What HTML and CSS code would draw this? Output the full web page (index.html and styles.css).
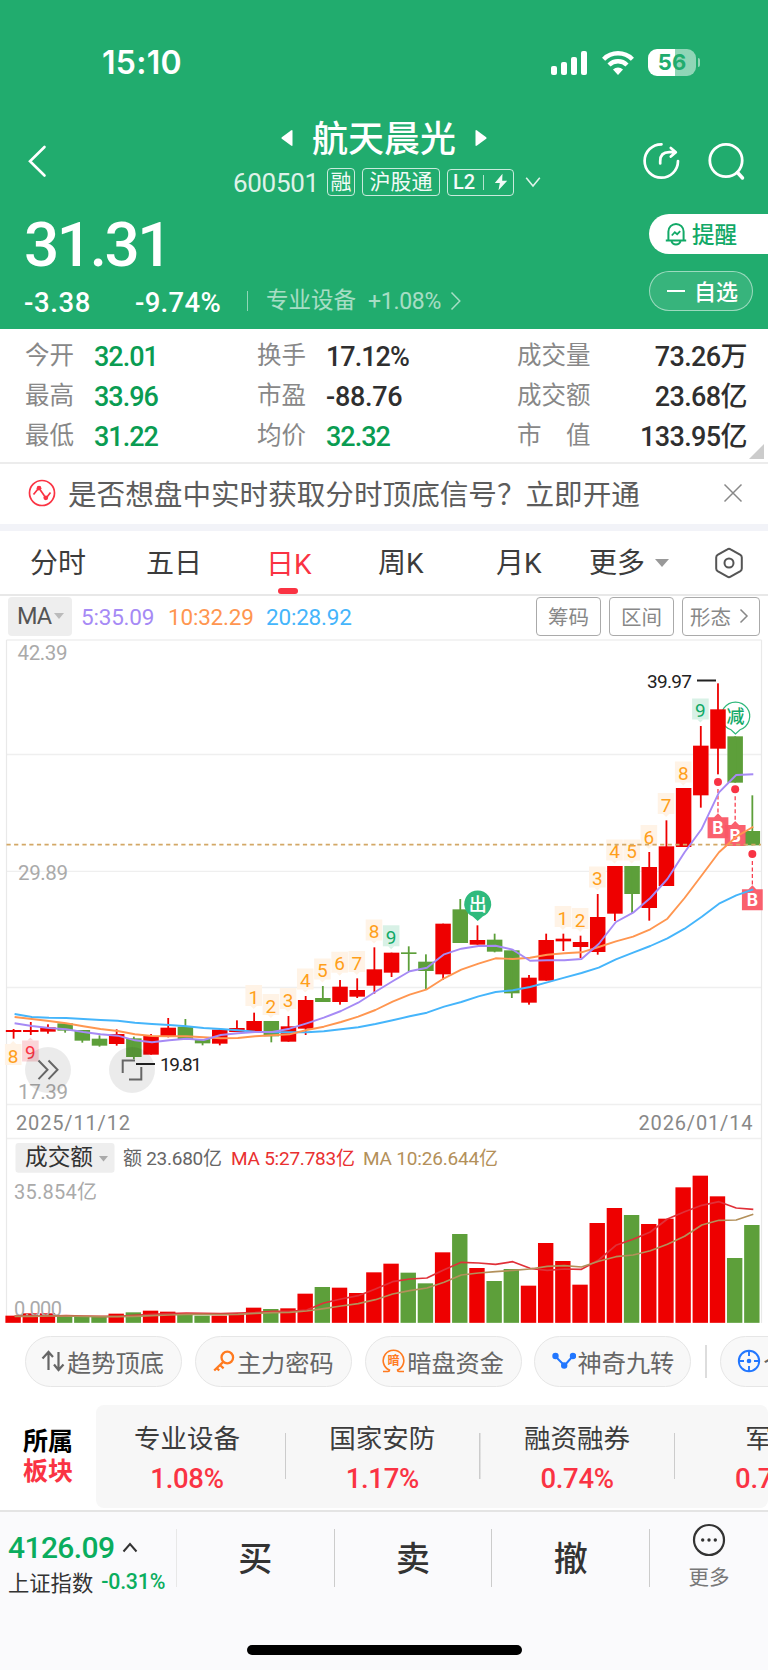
FILE: index.html
```html
<!DOCTYPE html>
<html lang="zh-CN">
<head>
<meta charset="utf-8">
<title>航天晨光 600501</title>
<link rel="stylesheet" href="styles.css">
</head>
<body>
<div class="app">
  <header class="hero">
    <div class="status">
      <span class="clock">15:10</span>
      <div class="status-icons">
        <svg class="signal" width="38" height="26" viewBox="0 0 38 26" fill="#fff"><rect x="1" y="16" width="6" height="9" rx="2"/><rect x="11" y="12" width="6" height="13" rx="2"/><rect x="21" y="7" width="6" height="18" rx="2"/><rect x="31" y="1" width="6" height="24" rx="2"/></svg>
        <svg class="wifi" width="34" height="26" viewBox="0 0 34 26" fill="none" stroke="#fff" stroke-width="4.4"><path d="M2.6 9.2A20.5 20.5 0 0 1 31.4 9.2"/><path d="M8 15A12.8 12.8 0 0 1 26 15"/><path d="M17 25l-5-5.6a7.2 7.2 0 0 1 10 0z" fill="#fff" stroke="none"/></svg>
        <div class="battery"><span class="b-on">5</span><span class="b-off">6</span></div><i class="nub"></i>
      </div>
    </div>
    <div class="nav">
      <svg class="back" width="20" height="34" viewBox="0 0 20 34" fill="none" stroke="#fff" stroke-width="2.6" stroke-linecap="round"><path d="M17.500 3L3 17.300L17.500 31.500"/></svg>
      <div class="title-block">
        <div class="title-row">
          <svg width="12" height="18" viewBox="0 0 12 18" fill="#fff"><path d="M11.500 2v14q0 1.500-1.500.5L.8 9.800q-.8-.8 0-1.600L10 1.500q1.500-1 1.500.5z"/></svg>
          <h1>航天晨光</h1>
          <svg width="12" height="18" viewBox="0 0 12 18" fill="#fff"><path d="M.5 2v14q0 1.500 1.500.5l9.200-6.700q.8-.8 0-1.600L2 1.500Q.5.5.5 2z"/></svg>
        </div>
        <div class="code-row">
          <span class="code">600501</span>
          <span class="tag tag-rong">融</span>
          <span class="tag tag-hk">沪股通</span>
          <span class="tag tag-l2">L2<i></i><svg width="14" height="18" viewBox="0 0 14 18" fill="#fff"><path d="M8.500.8L.8 10h5L4.500 17.200 13.200 7.800H8.200z"/></svg></span>
          <svg class="down" width="16" height="12" viewBox="0 0 16 12" fill="none" stroke="#fff" stroke-opacity=".85" stroke-width="1.600"><path d="M1.200 1.800L8 10 14.800 1.800"/></svg>
        </div>
      </div>
      <div class="nav-actions">
        <svg width="40" height="40" viewBox="0 0 40 40" fill="none" stroke="#fff" stroke-width="2.700" stroke-linecap="round"><path d="M20.500 3.300A16.700 16.700 0 1 0 37 20"/><path d="M19.200 22.500v-2.300q0-9 9-9h5.500M29.800 7l5 4.300-5 4.300" stroke-linejoin="round"/></svg>
        <svg width="40" height="40" viewBox="0 0 40 40" fill="none" stroke="#fff" stroke-width="2.800" stroke-linecap="round"><circle cx="20" cy="19.500" r="16.200"/><path d="M31.500 31.500l5 5.500" stroke-width="3.500"/></svg>
      </div>
    </div>
    <div class="quote">
      <div class="price-block">
        <div class="price">31.31</div>
        <div class="change-row"><span class="chg">-3.38</span><span class="pct">-9.74%</span><i class="bar"></i><span class="industry">专业设备</span><span class="ind-pct">+1.08%</span><svg width="12" height="20" viewBox="0 0 12 20" fill="none" stroke="#fff" stroke-opacity=".6" stroke-width="1.500"><path d="M1.500 1.500L9.800 10 1.500 18.500"/></svg></div>
      </div>
      <div class="quote-actions">
        <div class="remind"><svg width="22" height="24" viewBox="0 0 22 24" fill="none" stroke="#12a967" stroke-width="2"><path d="M3.400 18v-8.500a7.600 7.600 0 0 1 15.200 0V18M.8 18.500h20.400M6.500 19.500c1.500 4 7.500 4 9 0" /><path d="M6.800 13.500l3-3.300 2.400 2 3-3" stroke-width="1.800"/></svg><span>提醒</span></div>
        <div class="watch"><i></i><span>自选</span></div>
      </div>
    </div>
  </header>

  <section class="stats">
    <div class="stat"><label>今开</label><b class="g">32.01</b></div><div class="stat"><label>换手</label><b>17.12%</b></div><div class="stat end"><label>成交量</label><b>73.26万</b></div>
    <div class="stat"><label>最高</label><b class="g">33.96</b></div><div class="stat"><label>市盈</label><b class="wide-num">-88.76</b></div><div class="stat end"><label>成交额</label><b>23.68亿</b></div>
    <div class="stat"><label>最低</label><b class="g">31.22</b></div><div class="stat"><label>均价</label><b class="g">32.32</b></div><div class="stat end"><label>市<em></em>值</label><b>133.95亿</b></div>
    <i class="corner"></i>
  </section>

  <section class="notice">
    <svg width="28" height="28" viewBox="0 0 28 28" fill="none" stroke="#fa3343" stroke-width="1.700"><circle cx="14" cy="14" r="12.500"/><path d="M5.500 15.500l4.500-5.500M12.300 11l4.200 6M19 18l3.500-4.500"/><circle cx="11" cy="9.200" r="2.400" fill="#fa3343" stroke="none"/><circle cx="17.800" cy="18.800" r="2.400" fill="#fa3343" stroke="none"/></svg>
    <p>是否想盘中实时获取分时顶底信号？立即开通</p>
    <svg class="close" width="20" height="20" viewBox="0 0 20 20" stroke="#888" stroke-width="1.500"><path d="M1.500 1.500l17 17M18.500 1.500l-17 17"/></svg>
  </section>

  <nav class="tabs">
    <span class="t1">分时</span><span class="t2">五日</span><span class="t3 active">日K</span><span class="t4">周K</span><span class="t5">月K</span><span class="t6">更多<i class="caret"></i></span>
    <svg width="30" height="32" viewBox="0 0 30 32" fill="none" stroke="#555" stroke-width="2"><path d="M15 1.800q.8 0 1.600.5l9.800 5.600q1.400.9 1.400 2.500v11.200q0 1.600-1.400 2.500l-9.800 5.600q-1.600.9-3.200 0l-9.800-5.600q-1.400-.9-1.400-2.500V10.400q0-1.600 1.400-2.500l9.800-5.600q.8-.5 1.600-.5z"/><circle cx="15" cy="16" r="4.500"/></svg>
  </nav>

  <section class="ma-row">
    <span class="ma-pill">MA<i class="caret"></i></span>
    <span class="ma m5">5:35.09</span><span class="ma m10">10:32.29</span><span class="ma m20">20:28.92</span>
    <div class="ma-btns"><span>筹码</span><span>区间</span><span class="wide">形态<svg width="10" height="16" viewBox="0 0 10 16" fill="none" stroke="#888" stroke-width="1.500"><path d="M1.500 1.500L8 8l-6.500 6.500"/></svg></span></div>
  </section>

  <section class="chart"><svg id="kline" width="768" height="692" viewBox="0 636 768 692"></svg></section>

  <section class="chips">
    <span class="chip up"><svg width="26" height="22" viewBox="0 0 26 22" fill="none" stroke="#666" stroke-width="2.200"><path d="M7.500 20V2.500M1.500 8.500L7.500 2l4.500 5M17.500 2v18M13 14.500l4.500 5.500 5-5.500"/></svg>趋势顶底</span>
    <span class="chip"><svg width="22" height="22" viewBox="0 0 22 22" fill="none" stroke="#ff7a1f" stroke-width="2.300"><circle cx="14.300" cy="7.500" r="5.800"/><path d="M10.300 11.800L1.200 20.500M7 15l3.600 3.300M3.700 18l2.500 2.500"/></svg>主力密码</span>
    <span class="chip"><svg width="23" height="24" viewBox="0 0 23 24" fill="none" stroke="#ff7a1f" stroke-width="1.600"><path d="M1 22.500h5q1.500 0 1.500-1.400A10.300 10.300 0 1 1 15.500 21.100q0 1.400 1.500 1.400h5"/><text class="dark-txt" x="11.500" y="16" text-anchor="middle">暗</text></svg>暗盘资金</span>
    <span class="chip"><svg width="24" height="18" viewBox="0 0 24 18" fill="#2277ff" stroke="#2277ff" stroke-width="2"><path d="M3.500 4.500l9 9 8-9" fill="none"/><circle cx="3.500" cy="4" r="2.200"/><circle cx="12.200" cy="13.500" r="2.200"/><circle cx="21" cy="4" r="2.200"/></svg>神奇九转</span>
    <i class="sep"></i>
    <span class="chip cut"><svg width="24" height="24" viewBox="0 0 24 24" fill="none" stroke="#2277ff" stroke-width="1.900"><circle cx="12" cy="12" r="10.200"/><path d="M12 2v5M12 17v5M2 12h5M17 12h5"/><circle cx="12" cy="12" r="2.300" fill="#2277ff" stroke="none"/></svg>个股</span>
  </section>

  <section class="sector">
    <div class="sector-name"><b>所属</b><b class="r">板块</b></div>
    <div class="sector-list">
      <div class="item"><span>专业设备</span><b>1.08%</b></div>
      <div class="item"><span>国家安防</span><b>1.17%</b></div>
      <div class="item"><span>融资融券</span><b>0.74%</b></div>
      <div class="item"><span>军工</span><b>0.75%</b></div>
    </div>
  </section>

  <footer class="dock">
    <div class="dock-row">
      <div class="index"><div class="index-top"><b>4126.09</b><svg width="16" height="11" viewBox="0 0 16 11" fill="none" stroke="#333" stroke-width="2"><path d="M1.500 9.500L8 2l6.500 7.500"/></svg></div><div class="index-sub"><span>上证指数</span><em>-0.31%</em></div></div>
      <div class="act">买</div><div class="act">卖</div><div class="act">撤</div>
      <div class="more"><svg width="34" height="34" viewBox="0 0 34 34"><circle cx="17" cy="17" r="15" fill="none" stroke="#333" stroke-width="2.200"/><g fill="#333"><circle cx="10.700" cy="17" r="1.700"/><circle cx="17" cy="17" r="1.700"/><circle cx="23.300" cy="17" r="1.700"/></g></svg><span>更多</span></div>
    </div>
    <i class="home"></i>
  </footer>
</div>
<script src="chart.js"></script>
</body>
</html>
```
FILE: styles.css
```css
* { box-sizing: border-box; }
body { margin: 0; background: #fff; font-family: Roboto, "Noto Sans CJK SC", sans-serif; color: #333; }
.app { width: 768px; height: 1670px; overflow: hidden; display: flex; flex-direction: column; }
.app > * { flex: none; }
svg { display: block; flex: none; }
i, em { font-style: normal; display: block; flex: none; }
h1, p { margin: 0; }
span, b, label { white-space: nowrap; }

.hero { height: 329px; background: #21ac6e; color: #fff; display: flex; flex-direction: column; }
.status { height: 112px; padding: 13px 68px 0 102px; display: flex; align-items: center; justify-content: space-between; }
.clock { font: 600 32px/38px Inter, sans-serif; letter-spacing: 0.3px; }
.status-icons { display: flex; align-items: center; }
.wifi { margin-left: 13px; }
.battery { margin-left: 13px; width: 48px; height: 27px; border-radius: 9px; display: flex; justify-content: center; align-items: center; background: linear-gradient(90deg, #fff 56%, rgba(255,255,255,.5) 56%); color: #21ac6e; font: 700 22px/27px Inter, sans-serif; }
.nub { width: 2px; height: 9px; margin-left: 2px; border-radius: 0 2px 2px 0; background: rgba(255,255,255,.5); }

.nav { height: 92px; display: grid; grid-template-columns: 207px 362px 1fr; }
.back { margin: 32px 0 0 27px; }
.title-row { display: flex; align-items: center; height: 52px; gap: 19px; padding-left: 74px; }
h1 { font: 500 36px/48px "Noto Sans CJK SC", sans-serif; height: 52px; }
.code-row { display: flex; align-items: center; height: 28px; margin-top: 4px; padding-left: 26px; }
.code { width: 94px; font-size: 26px; line-height: 28px; letter-spacing: -0.3px; opacity: .85; padding-top: 2px; }
.tag { border: 1px solid rgba(255,255,255,.8); border-radius: 4px; height: 28px; display: flex; align-items: center; justify-content: center; font-size: 21px; line-height: 26px; opacity: .95; }
.tag-rong { width: 28px; margin-right: 7px; }
.tag-hk { width: 78px; margin-right: 7px; }
.tag-l2 { width: 67px; height: 27px; font-weight: 500; font-size: 20px; }
.tag-l2 i { width: 1px; height: 15px; background: rgba(255,255,255,.7); margin: 0 10px 0 8px; }
.down { margin-left: 11px; }
.nav-actions { display: flex; gap: 25px; padding: 29px 0 0 72px; }

.quote { display: flex; justify-content: space-between; height: 125px; }
.price-block { padding-left: 24px; }
.price { font-size: 62px; font-weight: 500; line-height: 62px; letter-spacing: -2.4px; margin-top: 10px; height: 62px; }
.change-row { display: flex; align-items: center; height: 34px; margin-top: 8px; }
.chg, .pct { font-size: 27.500px; font-weight: 500; letter-spacing: 0.600px; padding-top: 2px; }
.chg { width: 111px; } .pct { width: 112px; letter-spacing: 0.300px; }
.bar { width: 1px; height: 20px; background: rgba(255,255,255,.5); }
.industry { font-size: 22.5px; margin-left: 18px; opacity: .6; line-height: 30px; padding-bottom: 2px; }
.ind-pct { font-size: 23px; opacity: .6; margin-left: 12px; width: 82px; letter-spacing: -0.300px; }
.quote-actions { width: 119px; padding-top: 10px; }
.remind { height: 40px; background: #fff; border-radius: 20px 0 0 20px; color: #12a967; display: flex; align-items: center; padding-left: 16px; font-size: 22.500px; font-weight: 500; gap: 5px; }
.remind span, .watch span { padding-bottom: 2px; }
.watch { width: 104px; height: 40px; margin-top: 17px; border: 1px solid rgba(255,255,255,.5); background: rgba(255,255,255,.1); border-radius: 20px; display: flex; align-items: center; font-size: 22px; font-weight: 500; padding-left: 17px; }
.watch i { width: 18px; height: 2px; background: #fff; margin-right: 9px; }

.stats { position: relative; height: 135px; display: grid; grid-template-columns: 232px 261px 1fr; grid-template-rows: repeat(3, 40px); padding: 7px 21px 0 25px; border-bottom: 2px solid #ececec; }
.stat { display: flex; align-items: center; }
.stat label { font-size: 24.500px; line-height: 40px; color: #888; margin-right: 20px; display: flex; }
.stat label em { width: 24.500px; }
.stat b { font-weight: 500; font-size: 27px; letter-spacing: -1px; line-height: 40px; padding-top: 2px; color: #2f2f2f; }
.stat b.wide-num { letter-spacing: -0.300px; }
.stat.end { justify-content: space-between; }
.stat.end label { margin-left: -1px; }
.stat.end b { letter-spacing: -0.600px; }
.stat b.g { color: #0a9c52; }
.corner { position: absolute; right: 4px; bottom: 3px; border-left: 15px solid transparent; border-bottom: 15px solid #ccc; }

.notice { height: 67px; display: flex; align-items: center; padding: 0 25px 0 28px; border-bottom: 7px solid #f2f3f8; }
.notice > svg { margin-bottom: 2px; }
.notice p { font-size: 28.600px; margin-left: 12px; flex: 1; white-space: nowrap; line-height: 40px; padding-top: 1px; color: #5c5c5c; }

.tabs { height: 65px; display: grid; grid-template-columns: 116px 120px 112px 118px 93px 125px 1fr; align-items: center; padding-left: 30px; border-bottom: 2px solid #e8e8e8; font-size: 28px; color: #3c3c3c; }
.tabs span { height: 64px; line-height: 67px; display: flex; align-items: center; }
.tabs .active { color: #fa3343; flex-direction: column; align-items: flex-start; }
.tabs .active::after { content: ""; width: 20px; height: 6px; border-radius: 3px; background: #fa3343; margin: -10px 0 0 12px; }
.caret { border: 7px solid transparent; border-top: 8px solid #999; border-bottom: 0; }
.tabs .caret { margin-left: 10px; }
.ma-row { height: 40px; display: flex; align-items: center; padding: 0 8px; }
.ma-pill { width: 64px; height: 39px; background: #eee; border-radius: 4px; display: flex; align-items: center; padding-left: 9px; font-size: 23.500px; color: #555; letter-spacing: -1px; margin-right: 9px; }
.ma-pill .caret { border-width: 6px 5px 0; border-top-color: #bbb; margin-left: 3px; }
.ma { font-size: 22.500px; letter-spacing: -0.200px; padding-top: 1px; }
.m5 { color: #a68af5; width: 87px; } .m10 { color: #ff9650; width: 98px; } .m20 { color: #45b5fb; }
.ma-btns { display: flex; gap: 8px; margin-left: auto; }
.ma-btns span { width: 65px; height: 39px; border: 1.500px solid #aaa; border-radius: 4px; display: flex; align-items: center; justify-content: center; color: #888; font-size: 20.500px; }
.ma-btns .wide { width: 78px; gap: 8px; padding-right: 3px; }

.chart { height: 692px; }
#kline text { font-family: Roboto, "Noto Sans CJK SC", sans-serif; }

.chips { height: 68px; display: flex; padding: 8px 0 0 25px; }
.chip { width: 157px; height: 51px; border: 1.500px solid #e6e6e6; background: #f8f8f8; border-radius: 26px; display: flex; align-items: center; justify-content: center; font-size: 24.200px; color: #666; margin-right: 12.800px; flex: none; gap: 2px; padding-bottom: 1px; }
.chip.up { gap: 0; padding-right: 2px; }
.dark-txt { font-size: 12px; font-weight: 700; fill: #ff7a1f; stroke: none; }
.sep { width: 2px; height: 33px; background: #ddd; margin: 9px 13px 0 1px; }
.chip.cut { justify-content: flex-start; padding-left: 16px; margin: 0; }

.sector { height: 116px; display: flex; padding-top: 9px; border-bottom: 2px solid #e4e4e4; }
.sector-name { width: 96px; height: 103px; display: flex; flex-direction: column; align-items: center; justify-content: center; font-size: 25px; line-height: 30px; color: #000; }
.r { color: #fa3343; }
.sector-list { width: 672px; height: 103px; background: #f7f7f7; border-radius: 8px; overflow: hidden; display: flex; }
.item { flex: none; width: 194.700px; display: flex; flex-direction: column; align-items: center; padding: 15px 2px 0 0; background: linear-gradient(#ccc, #ccc) right 28px / 1.500px 46px no-repeat; }
.item:first-child { width: 190px; padding-right: 8px; }
.item span { font-size: 26.500px; line-height: 38px; color: #3c3c3c; }
.item b { font-size: 27.500px; font-weight: 500; line-height: 36px; margin-top: 3px; letter-spacing: -0.300px; color: #fa3343; }

.dock { height: 158px; background: #fafafc; }
.dock-row { height: 83px; display: flex; padding-top: 17px; }
.index { width: 177px; height: 58px; padding-left: 8px; border-right: 1px solid #e8e8e8; }
.index-top { display: flex; align-items: center; gap: 8px; height: 36px; }
.index-top b { font-size: 30px; font-weight: 500; letter-spacing: -0.600px; color: #0aad5e; }
.index-sub { display: flex; align-items: center; gap: 8px; font-size: 21.300px; height: 34px; margin-top: -1px; }
.index-sub em { color: #0aad5e; font-weight: 500; letter-spacing: -0.200px; }
.act { width: 157.700px; height: 58px; border-right: 1px solid #ccc; font-size: 34px; font-weight: 500; line-height: 61px; text-align: center; }
.more { width: 118px; display: flex; flex-direction: column; align-items: center; color: #777; font-size: 20.500px; margin-top: -6px; }
.more span { line-height: 30px; margin-top: 6px; }
.home { width: 275px; height: 10px; border-radius: 5px; background: #000; margin: 50px auto 0; }
```
FILE: chart.js
```javascript
const svg = document.getElementById('kline');
const RED = '#ee0000', GREEN = '#5d9f3a', STEP = 17.18, X0 = 13.6;
const cx = i => X0 + i * STEP;
const out = [];
const add = s => out.push(s);

// grid
[640, 754.5, 871.3, 987.5, 1104.5, 1138.5].forEach(y =>
  add(`<path d="M6.500 ${y}H761.500" stroke="#efefef" stroke-width="1.300"/>`));
add('<path d="M6.500 640V1323M761.500 640V1323" stroke="#e9e9e9" stroke-width="1.200"/>');

const text = (x, y, s, size, fill, len, extra = '') =>
  add(`<text x="${x}" y="${y}" font-size="${size}" fill="${fill}" textLength="${len}" ${extra}>${s}</text>`);

// signal bubble drawn under the candles
add('<path d="M735.500 734l-4.500-4.300A14.200 14.200 0 1 1 740 729.700z" fill="#fff" stroke="#2fb87b" stroke-width="1.200"/>');
add('<text x="735.500" y="723" font-size="18" font-weight="500" fill="#12a967" text-anchor="middle">减</text>');

// candles: origin, colour, body top, body bottom, high, low (offsets in thirds of a pixel)
const candles = [
  [900,1,390,396,387,416],[900,1,390,396,366,405],[900,1,382,395,373,401],[900,0,370,392,370,398],
  [900,0,390,422,390,428],[900,0,416,437,406,440],[900,1,402,432,388,437],[900,0,415,471,410,478],
  [900,1,408,464,402,464],[900,1,383,408,354,412],[900,0,380,418,357,418],[900,0,417,430,417,436],
  [900,1,389,431,384,436],[900,1,384,396,361,396],[900,1,363,395,338,395],[900,0,363,409,363,427],
  [900,1,379,425,348,425],[900,1,300,386,288,405],[900,0,294,306,258,306],[900,1,260,306,240,314],
  [900,1,270,290,235,294],[900,1,208,257,142,281],[800,1,458,518,458,531],[800,0,457,462,439,515],
  [800,0,485,513,463,567],[800,1,371,523,371,539],[800,0,328,429,297,429],[800,1,420,434,376,434],
  [800,0,419,455,401,457],[800,0,451,580,451,594],[800,1,533,608,525,614],[800,1,420,542,401,542],
  [800,1,416,424,401,453],[800,1,426,441,407,474],[800,1,351,456,282,464],[800,1,198,341,198,363],
  [800,0,198,282,198,340],[800,1,201,324,156,362],[800,1,139,258,61,258],[640,1,444,621,444,621],
  [640,1,317,466,258,503],[640,1,208,326,130,403],[640,0,289,428,289,428],[640,0,573,616,466,616]
];
candles.forEach(([o, up, t, b, h, l], i) => {
  const c = up ? RED : GREEN, x = cx(i);
  add(`<rect x="${x - 7.75}" y="${o + t / 3}" width="15.500" height="${(b - t) / 3}" fill="${c}"/>`);
  add(`<rect x="${x - 0.9}" y="${o + h / 3}" width="1.800" height="${(l - h) / 3}" fill="${c}"/>`);
});

// numbered sequence tags
const tag = (i, y, n, kind = 'o', up = false) => {
  const x = cx(i) - 0.4, bg = {o:'#fff3e6', g:'#d8f1e6', r:'#fbd5d8'}[kind], fg = {o:'#ff9f1a', g:'#12a967', r:'#fa3343'}[kind];
  add(`<rect x="${x - 8.3}" y="${y}" width="16.600" height="21" fill="${bg}"/>`);
  add(up ? `<path d="M${x - 3} ${y}l3-3 3 3z" fill="${bg}"/>` : `<path d="M${x - 3} ${y + 21}l3 3 3-3z" fill="${bg}"/>`);
  add(`<text x="${x}" y="${y + 18.5}" font-size="19" fill="${fg}" text-anchor="middle">${n}</text>`);
};
tag(0,1044,8,'o',true); tag(1,1040.500,9,'r',true);
[[14,985,1],[15,994,2],[16,988,3],[17,968.5,4],[18,958.5,5],[19,951.7,6],[20,951,7],[21,919.5,8],
 [32,906,1],[33,908,2],[34,866.5,3],[35,839.5,4],[36,839.5,5],[37,825,6],[38,793,7],[39,761.5,8]]
  .forEach(t => tag(...t));
tag(22,925.3,9,'g'); tag(40,698.5,9,'g');

add('<path d="M477.700 921l-5-4.500A13.500 13.500 0 1 1 482.700 916.500z" fill="#2fba7d"/>');
add('<text x="477.700" y="910.500" font-size="18" font-weight="500" fill="#fff" text-anchor="middle">出</text>');

// buy points
[[41,782,817.3],[42,789.3,825],[43,854,889.3]].forEach(([i, d, y]) => {
  const x = cx(i);
  add(`<circle cx="${x}" cy="${d}" r="4" fill="#f83344"/>`);
  add(`<path d="M${x} ${d + 7}V${y - 2}" stroke="#f83344" stroke-width="1.200" stroke-dasharray="4 2.500"/>`);
  add(`<path d="M${x - 10.4} ${y}h6.500l3.900-4 3.900 4h6.500v21h-20.800z" fill="#fa5766" fill-opacity=".95"/>`);
  add(`<text x="${x}" y="${y + 16.500}" font-size="17" font-weight="700" fill="#fff" text-anchor="middle" style="font-family:Inter">B</text>`);
});

// last price
add('<path d="M6.500 844.700H761" stroke="#d3a866" stroke-width="1.700" stroke-dasharray="4.200 3.400"/>');

// moving averages
const line = (parts, color, w = 1.9) => {
  let i = 0;
  const p = parts.flatMap(([o, ...v]) => v.map(n => `${(cx(i++) + 1).toFixed(1)} ${(o + n / 3).toFixed(1)}`));
  add(`<path d="M${p.join('L')}" fill="none" stroke="${color}" stroke-width="${w}" stroke-linejoin="round"/>`);
};
line([[900,342,351,353,354,357,360,362,368,372,375,379,384,387,391,395,397,397,397,394,388,382,372],
  [800,661,649,638,620,606,589,576,571,561,547,533,519,503,478,458,438,415,386,350,311,286,268]], '#45b5fb');
line([[900,351,357,363,370,379,387,393,403,408,409,409,412,415,414,409,406,403,390,380,366,350,330],
  [800,605,584,568,535,509,491,475,477,473,464,460,457,441,424,410,388,356,294,226,157],[640,590,560]], '#ff9650');
line([[900,370,378,384,388,396,403,407,421,427,421,416,420,405,400,396,396,386,370,353,333,308,275],
  [800,544,514,503,463,446,438,437,449,482,481,481,477,432,366,338,294,237,157],[640,566,457,405,403]], '#a68af5');

// axis labels and extremes
text(17.500, 660, '42.39', 20.500, '#aaa', 50);
text(18, 879.500, '29.89', 20.500, '#aaa', 50);
text(18, 1099, '17.39', 20.500, '#aaa', 50);
text(647, 687.700, '39.97', 19, '#222', 45);
text(160, 1071.300, '19.81', 19, '#222', 42);
add('<path d="M697 680.500H716M136 1064H155" stroke="#222" stroke-width="2"/>');
text(16, 1130, '2025/11/12', 20, '#888', 114);
text(638.500, 1130, '2026/01/14', 20, '#888', 114);

// floating controls
add('<g fill="#000" fill-opacity=".08"><circle cx="48" cy="1070" r="23"/><circle cx="132" cy="1070" r="23"/></g>');
add('<g fill="none" stroke="#666" stroke-width="2"><path d="M38.500 1060.500l9 9.300-9 9.300M48.500 1060.500l9 9.300-9 9.300"/><path d="M122.700 1073V1060.500H135M141.300 1067V1079.500H129"/></g>');

// turnover header
add('<rect x="15.500" y="1143" width="99" height="29.700" rx="3" fill="#eee"/><path d="M99 1156h9l-4.500 5.500z" fill="#aaa"/>');
text(25, 1165, '成交额', 22.700, '#333', 68);
text(123, 1165.200, '额 23.680亿', 19, '#666', 99);
text(231, 1165.200, 'MA 5:27.783亿', 19, '#e93030', 124);
text(363, 1165.200, 'MA 10:26.644亿', 19, '#b3905a', 135);
text(14, 1198.500, '35.854亿', 20, '#aaa', 83);

// turnover bars
const vol = [587,580,580,590,590,591,581,577,572,575,585,587,587,579,563,567,565,521,501,503,519,457,431,458,490,397,
  342,444,483,447,497,369,423,494,309,264,285,312,296,202,167,229,414,315];
vol.forEach((v, i) => add(`<rect x="${cx(i) - 8.2}" y="${1120 + v / 3}" width="15.400" height="${(608.5 - v) / 3}" fill="${candles[i][1] ? RED : GREEN}"/>`));
text(14, 1315.500, '0.000', 20, '#aaa', 48);
line([[1120,588,588,588,587,588,589,589,586,583,581,579,580,581,579,578,574,574,570,549,537,527,507,485,477,474,449,427,429,433,
  425,445,451,447,448,420,376,358,336,297,275,256,245,264,268]], '#e03038', 1.7);
line([[1120,589,589,588,588,589,590,590,589,587,585,583,583,584,583,580,578,577,573,566,558,551,539,522,512,504,487,465,459,455,
  451,447,439,437,441,424,410,405,392,373,349,315,301,300,283]], '#b3905a', 1.7);

svg.innerHTML = out.join('');
```
